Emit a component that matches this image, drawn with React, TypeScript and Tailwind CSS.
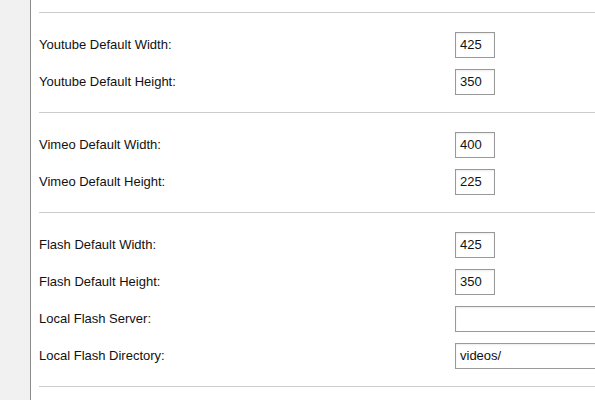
import React from "react";

type Row = { label: string; value: string; wide?: boolean };

const sections: Row[][] = [
  [
    { label: "Youtube Default Width:", value: "425" },
    { label: "Youtube Default Height:", value: "350" },
  ],
  [
    { label: "Vimeo Default Width:", value: "400" },
    { label: "Vimeo Default Height:", value: "225" },
  ],
  [
    { label: "Flash Default Width:", value: "425" },
    { label: "Flash Default Height:", value: "350" },
    { label: "Local Flash Server:", value: "", wide: true },
    { label: "Local Flash Directory:", value: "videos/", wide: true },
  ],
];

export default function App() {
  return (
    <div
      className="flex h-[400px] w-[595px] overflow-hidden bg-white text-[13px] text-[#111]"
      style={{ fontFamily: '"Liberation Sans", Arial, sans-serif' }}
    >
      <div className="w-[30px] shrink-0 bg-[#f1f1f1]" />
      <div className="w-px shrink-0 bg-[#8c8c8c]" />
      <div className="flex min-w-0 flex-1 flex-col pl-[8px] pt-[12px]">
        {sections.map((rows, i) => (
          <div key={i} className="flex flex-col">
            <div className="h-px bg-[#cccccc]" />
            <div className="flex flex-col pt-[13px] pb-[12px]">
              {rows.map((r) => (
                <div key={r.label} className="flex h-[37px] items-center">
                  <div className="w-[416px] shrink-0">{r.label}</div>
                  <div
                    className={`flex h-[26px] shrink-0 items-center border border-[#999] bg-white pl-[4px] shadow-[inset_0_1px_2px_rgba(0,0,0,0.08)] ${
                      r.wide ? "w-[200px]" : "w-[40px]"
                    }`}
                  >
                    {r.value}
                  </div>
                </div>
              ))}
            </div>
          </div>
        ))}
        <div className="h-px bg-[#cccccc]" />
      </div>
    </div>
  );
}
